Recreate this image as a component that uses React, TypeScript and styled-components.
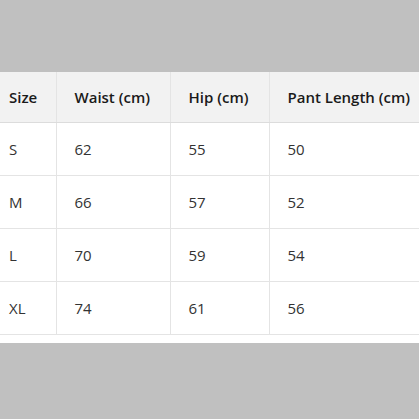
import React from "react";
import styled, { createGlobalStyle } from "styled-components";

const Global = createGlobalStyle`
  html, body { margin: 0; padding: 0; background: #c0c0c0; }
  body { font-family: "Open Sans", "Noto Sans", sans-serif; width: 419px; height: 419px; overflow: hidden; }
`;

const Page = styled.div`
  display: flex;
  flex-direction: column;
  padding-top: 72px;
`;

const Sheet = styled.div`
  background: #ffffff;
  padding-bottom: 8px;
  overflow: hidden;
`;

const Table = styled.table`
  border-collapse: collapse;
  table-layout: fixed;
  width: 440px;
  font-size: 15px;
  color: #222;
`;

const HeadCell = styled.th<{ $first?: boolean }>`
  background: #f2f2f2;
  height: 50px;
  padding: 0 0 0 ${(p) => (p.$first ? 9 : 18)}px;
  text-align: left;
  font-weight: 600;
  color: #1a1a1a;
  border-bottom: 1px solid #dcdcdc;
  border-right: 1px solid #e4e4e4;
  white-space: nowrap;
  &:last-child { border-right: none; }
`;

const Cell = styled.td<{ $first?: boolean }>`
  height: 52px;
  padding: 0 0 0 ${(p) => (p.$first ? 9 : 18)}px;
  border-bottom: 1px solid #e4e4e4;
  border-right: 1px solid #e4e4e4;
  color: #333;
  &:last-child { border-right: none; }
`;

const cols = [56, 114, 99, 171];
const headers = ["Size", "Waist (cm)", "Hip (cm)", "Pant Length (cm)"];
const rows = [
  ["S", "62", "55", "50"],
  ["M", "66", "57", "52"],
  ["L", "70", "59", "54"],
  ["XL", "74", "61", "56"],
];

export default function App() {
  return (
    <Page>
      <Global />
      <Sheet>
        <Table>
          <colgroup>
            {cols.map((w, i) => (
              <col key={i} style={{ width: w }} />
            ))}
          </colgroup>
          <thead>
            <tr>
              {headers.map((h, i) => (
                <HeadCell key={h} $first={i === 0}>{h}</HeadCell>
              ))}
            </tr>
          </thead>
          <tbody>
            {rows.map((r) => (
              <tr key={r[0]}>
                {r.map((c, i) => (
                  <Cell key={i} $first={i === 0}>{c}</Cell>
                ))}
              </tr>
            ))}
          </tbody>
        </Table>
      </Sheet>
    </Page>
  );
}
